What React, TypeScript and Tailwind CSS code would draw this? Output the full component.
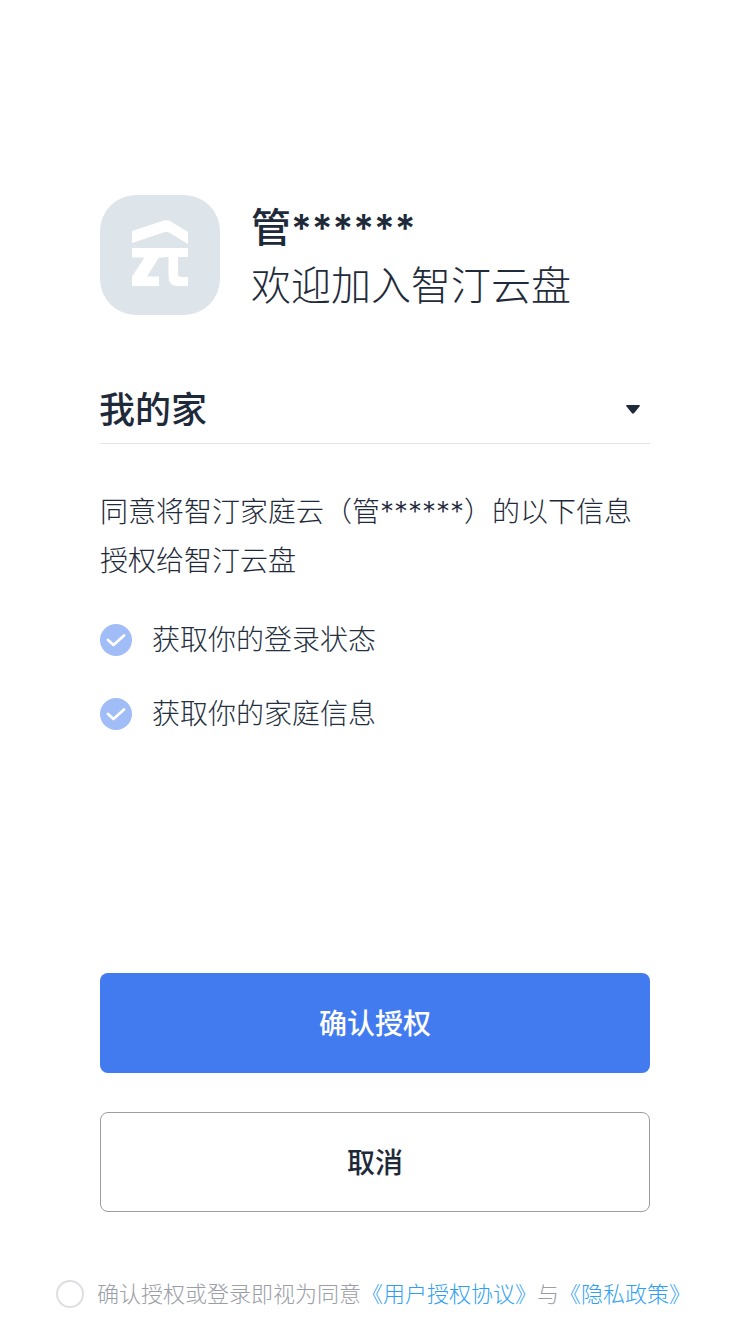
const FONT = "font-['Inter','Noto_Sans_CJK_SC',sans-serif]"

function Logo() {
  return (
    <div className="w-[120px] h-[120px] rounded-[36px] bg-[#dde4ea] flex-shrink-0 flex items-center justify-center">
      <svg width="120" height="120" viewBox="0 0 120 120" fill="#fff">
        <path d="M32 36 L64 25.500 Q67 24.800 70 26 L88 37 V49 L69 37.500 Q67 36.500 65 37 L32 48 Z" />
        <path d="M32 53 H59 V62.500 L47 81.500 H59 V91 H32 V81.500 L44.500 62.500 H32 Z" />
        <path d="M59 53 H88 V62 H78 V79 Q78 82 81 82 H88 V91 H78 Q68.500 91 68.500 82 V62 Q64 62 59 63 Z" />
      </svg>
    </div>
  )
}

function CheckRow({ label }: { label: string }) {
  return (
    <div className="flex items-center gap-[20px] h-[32px]">
      <svg width="32" height="32" viewBox="0 0 32 32" className="flex-shrink-0">
        <circle cx="16" cy="16" r="16" fill="#a1bdf8" />
        <path d="M8 16 L13.500 21 L24 11.500" fill="none" stroke="#fff" strokeWidth="2.800" strokeLinecap="round" strokeLinejoin="round" />
      </svg>
      <span className="text-[28px] leading-[32px] font-light text-[#243040]">{label}</span>
    </div>
  )
}

export default function App() {
  return (
    <div className={`${FONT} relative w-[750px] h-[1334px] bg-white overflow-hidden text-[#1e2a3a]`}>
      <div className="flex flex-col px-[100px] pt-[195px]">
        <div className="flex gap-[31px]">
          <Logo />
          <div className="flex flex-col pt-[5px]">
            <div className="text-[40px] leading-[56px] font-medium text-[#1e2a3a]">
              管<span className="font-semibold text-[38.5px]">******</span>
            </div>
            <div className="text-[40px] leading-[56px] font-light text-[#1f2b3a] mt-[2px]">欢迎加入智汀云盘</div>
          </div>
        </div>

        <div className="mt-[68px] h-[61px] flex items-center justify-between border-b border-[#e3e5e8] pb-[6px]">
          <span className="text-[36px] leading-[50px] font-medium -ml-[1px]">我的家</span>
          <svg width="14" height="9" viewBox="0 0 14 9" className="mr-[10px] -mt-[1px]">
            <path d="M0.500 0 H13.500 Q14 0.500 13.500 1.500 L8 8.300 Q7 9.200 6 8.300 L0.500 1.500 Q0 0.500 0.500 0 Z" fill="#1e2a3a" />
          </svg>
        </div>

        <p className="mt-[44px] text-[28px] leading-[49px] font-light text-[#1e2a3a]">
          同意将智汀家庭云（管******）的以下信息
          <br />
          授权给智汀云盘
        </p>

        <div className="mt-[38px] flex flex-col gap-[42px]">
          <CheckRow label="获取你的登录状态" />
          <CheckRow label="获取你的家庭信息" />
        </div>

        <button className="mt-[243px] h-[100px] pt-[2px] rounded-[8px] bg-[#427bef] text-white text-[28px] font-medium">
          确认授权
        </button>
        <button className="mt-[39px] h-[100px] pt-[2px] rounded-[8px] border border-[#9a9da3] bg-white text-[#1e2a3a] text-[28px] font-medium">
          取消
        </button>
      </div>

      <div className="mt-[67px] ml-[56px] flex items-center gap-[13px] whitespace-nowrap">
        <div className="w-[28px] h-[28px] rounded-full border-2 border-[#dddfe2] flex-shrink-0" />
        <p className="text-[22px] leading-[30px] font-light text-[#9a9ea6]">
          确认授权或登录即视为同意<span className="text-[#2f9ff5]">《用户授权协议》</span>与<span className="text-[#2f9ff5]">《隐私政策》</span>
        </p>
      </div>
    </div>
  )
}
